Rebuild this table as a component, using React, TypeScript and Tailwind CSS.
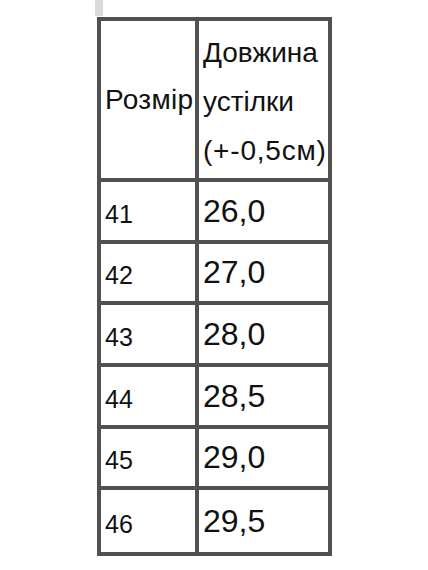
const rows = [
  { size: "41", length: "26,0" },
  { size: "42", length: "27,0" },
  { size: "43", length: "28,0" },
  { size: "44", length: "28,5" },
  { size: "45", length: "29,0" },
  { size: "46", length: "29,5" },
];

export default function App() {
  return (
    <div className="min-h-[570px] w-[428px] bg-white font-['Liberation_Sans',Arial,sans-serif] text-[#111]">
      <div className="ml-[95px] h-[16px] w-[8px] bg-[#dadada]" />
      <div className="ml-[97px] mt-[1px] w-[235px] border-4 border-[#505050]">
        <div className="flex h-[161px] border-b-4 border-[#505050]">
          <div className="flex w-[98px] shrink-0 items-center border-r-4 border-[#505050] pl-[4px] text-[28px] tracking-[0.3px]">
            Розмір
          </div>
          <div className="flex flex-1 flex-col justify-center pl-[4px] pt-[4px] text-[28px] leading-[49px]">
            <span>Довжина</span>
            <span>устілки</span>
            <span className="tracking-[0.8px]">(+-0,5см)</span>
          </div>
        </div>
        {rows.map((row, i) => (
          <div
            key={row.size}
            className={`flex h-[61.67px] ${i < rows.length - 1 ? "border-b-4 border-[#505050]" : ""}`}
          >
            <div className="flex w-[98px] shrink-0 items-center border-r-4 border-[#505050] pl-[4px] pt-[7px] text-[25px]">
              {row.size}
            </div>
            <div className="flex flex-1 items-center pl-[4px] text-[32px]">{row.length}</div>
          </div>
        ))}
      </div>
    </div>
  );
}
